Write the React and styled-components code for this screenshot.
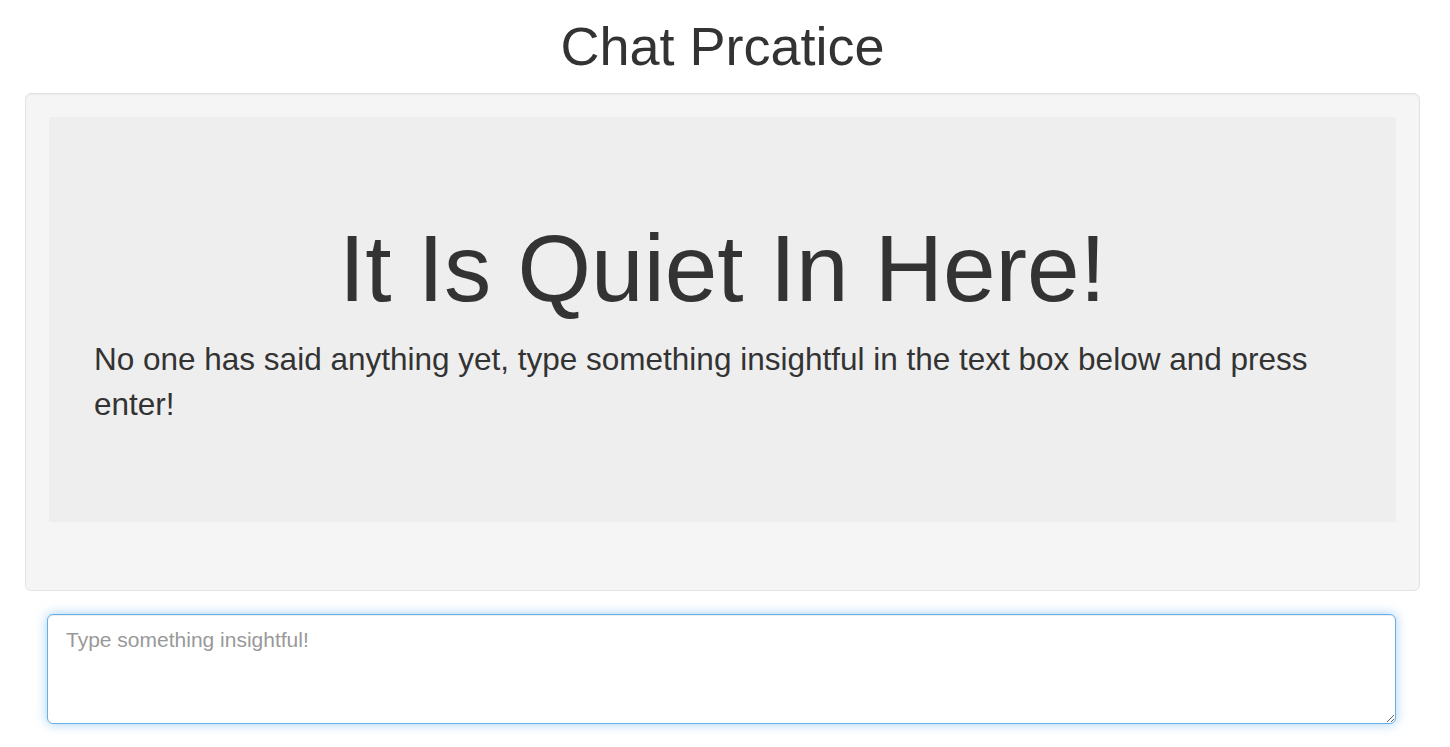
import React from "react";
import styled, { createGlobalStyle } from "styled-components";

const GlobalStyle = createGlobalStyle`
  html, body { margin: 0; padding: 0; background: #fff; }
  body {
    font-family: "Liberation Sans", Arial, Helvetica, sans-serif;
    color: #333;
  }
  * { box-sizing: border-box; }
`;

const Page = styled.div`
  display: flex;
  flex-direction: column;
  padding-bottom: 20px;
`;

const Title = styled.h1`
  margin: 17px 0 17px;
  padding-right: 5px;
  font-size: 54px;
  font-weight: 400;
  line-height: 1.1;
  text-align: center;
  color: #333;
`;

const Well = styled.div`
  margin: 0 30px 0 25px;
  padding: 23px 23px 68px;
  background: #f5f5f5;
  border: 1px solid #e3e3e3;
  border-radius: 6px;
  box-shadow: inset 0 1px 1px rgba(0, 0, 0, 0.05);
`;

const Jumbotron = styled.div`
  background: #eee;
  padding: 100px 45px 72px;
`;

const Heading = styled.h1`
  margin: 0 0 16px;
  font-size: 94.5px;
  font-weight: 400;
  line-height: 1.1;
  text-align: center;
  color: #333;
`;

const Lead = styled.p`
  margin: 0 0 23px;
  font-size: 31.5px;
  line-height: 45px;
  color: #333;
`;

const Form = styled.form`
  margin: 23px 54px 0 47px;
`;

const TextArea = styled.textarea`
  display: block;
  width: 100%;
  height: 110px;
  padding: 10px 18px 8px;
  font-family: "Liberation Sans", Arial, Helvetica, sans-serif;
  font-size: 21px;
  line-height: 30px;
  color: #555;
  background: #fff;
  border: 1px solid #66afe9;
  border-radius: 6px;
  outline: 0;
  box-shadow: inset 0 1px 1px rgba(0, 0, 0, 0.075),
    0 0 12px rgba(102, 175, 233, 0.6);
  &::placeholder {
    color: #999;
  }
`;

export default function App() {
  return (
    <>
      <GlobalStyle />
      <Page>
        <Title>Chat Prcatice</Title>
        <Well>
          <Jumbotron>
            <Heading>It Is Quiet In Here!</Heading>
            <Lead>
              No one has said anything yet, type something insightful in the
              text box below and press enter!
            </Lead>
          </Jumbotron>
        </Well>
        <Form onSubmit={(e) => e.preventDefault()}>
          <TextArea placeholder="Type something insightful!" />
        </Form>
      </Page>
    </>
  );
}
